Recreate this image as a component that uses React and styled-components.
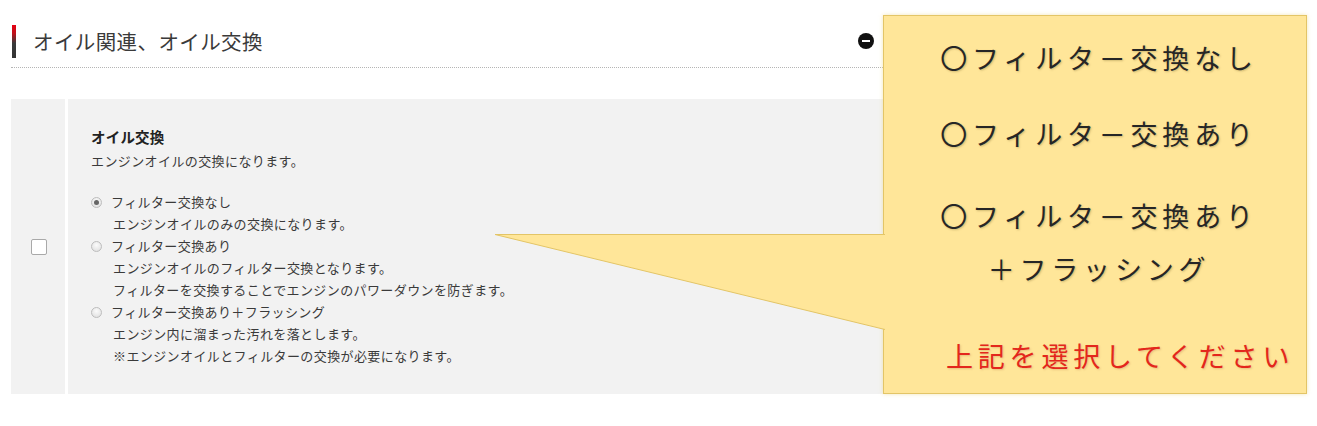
import React from "react";
import styled, { createGlobalStyle } from "styled-components";

const Global = createGlobalStyle`
  html, body { margin: 0; padding: 0; background: #fff; }
  body { font-family: "Noto Sans CJK JP", "Noto Sans", sans-serif; color: #333; }
`;

const Page = styled.div`
  position: relative;
  width: 1317px;
  height: 426px;
  overflow: hidden;
`;

const Section = styled.div`
  width: 872px;
  padding: 25px 0 0 11px;
`;

const Header = styled.div`
  display: flex;
  align-items: center;
  height: 33px;
  padding-bottom: 9px;
  border-bottom: 1px dotted #b5b5b5;
`;

const Bar = styled.span`
  width: 4px;
  height: 33px;
  margin-left: 1px;
  background: linear-gradient(#e60012 0%, #c0101a 25%, #3a3a3a 55%, #333 100%);
`;

const Title = styled.h2`
  flex: 1;
  margin: 0 0 0 17px;
  font-size: 20.5px;
  font-weight: 400;
  color: #3a3a3a;
  line-height: 33px;
  letter-spacing: 0.4px;
`;

const Toggle = styled.span`
  position: relative;
  width: 16px;
  height: 16px;
  margin-right: 9px;
  margin-top: -2px;
  border-radius: 50%;
  background: #111;
  &::after {
    content: "";
    position: absolute;
    left: 4px;
    top: 7px;
    width: 8px;
    height: 2px;
    background: #fff;
  }
`;

const Panel = styled.div`
  display: grid;
  grid-template-columns: 54px 3px 1fr;
  margin-top: 31px;
  height: 295px;
  background: #f2f2f2;
`;

const CheckCell = styled.div`
  display: flex;
  align-items: center;
  justify-content: center;
  padding-left: 1px;
`;

const Checkbox = styled.span`
  width: 14px;
  height: 14px;
  background: #fff;
  border: 1px solid #a9a9a9;
  border-radius: 2px;
  margin-top: 1px;
`;

const Divider = styled.div`
  background: #fff;
`;

const Content = styled.div`
  padding: 27px 0 0 23px;
  font-size: 13px;
  line-height: 22px;
  letter-spacing: 0.4px;
  color: #3a3a3a;
`;

const ItemTitle = styled.div`
  font-size: 14.5px;
  font-weight: 700;
  color: #222;
  letter-spacing: 0.2px;
`;

const Desc = styled.div`
  margin-top: 2px;
  margin-bottom: 19px;
`;

const Option = styled.div``;

const OptionLabel = styled.div`
  display: flex;
  align-items: center;
`;

const Radio = styled.span`
  position: relative;
  box-sizing: border-box;
  width: 11px;
  height: 11px;
  margin: 0 9px 0 0;
  border-radius: 50%;
  border: 1px solid #bdbdbd;
  background: radial-gradient(circle at 50% 35%, #fbfbfb, #dcdcdc);
  &::after {
    content: "";
    display: ${(p) => (p.$checked ? "block" : "none")};
    position: absolute;
    left: 2px;
    top: 2px;
    width: 5px;
    height: 5px;
    border-radius: 50%;
    background: #666;
  }
`;

const OptionNote = styled.div`
  padding-left: 22px;
`;

const Callout = styled.div`
  position: absolute;
  left: 883px;
  top: 15px;
  box-sizing: border-box;
  width: 424px;
  height: 379px;
  background: #ffe699;
  border: 1px solid #e3c567;
  box-shadow: 0 0 4px rgba(240, 220, 150, 0.7);
  padding-top: 24px;
  text-align: center;
`;

const Tail = styled.svg`
  position: absolute;
  left: 495px;
  top: 234px;
  overflow: visible;
`;

const CallLine = styled.div`
  font-size: 27px;
  line-height: 36px;
  letter-spacing: 4.8px;
  padding-left: 8px;
  color: #262626;
  text-shadow: 1px 1px 2px rgba(120, 100, 40, 0.35);
  margin-top: ${(p) => p.$mt || 0}px;
`;

const CallNote = styled(CallLine)`
  color: #e3271c;
  text-align: left;
  padding-left: 62px;
  text-shadow: 1px 1px 2px rgba(160, 80, 40, 0.25);
`;

const options = [
  { label: "フィルター交換なし", notes: ["エンジンオイルのみの交換になります。"], checked: true },
  {
    label: "フィルター交換あり",
    notes: ["エンジンオイルのフィルター交換となります。", "フィルターを交換することでエンジンのパワーダウンを防ぎます。"],
  },
  {
    label: "フィルター交換あり＋フラッシング",
    notes: ["エンジン内に溜まった汚れを落とします。", "※エンジンオイルとフィルターの交換が必要になります。"],
  },
];

export default function App() {
  return (
    <Page>
      <Global />
      <Section>
        <Header>
          <Bar />
          <Title>オイル関連、オイル交換</Title>
          <Toggle />
        </Header>
        <Panel>
          <CheckCell>
            <Checkbox />
          </CheckCell>
          <Divider />
          <Content>
            <ItemTitle>オイル交換</ItemTitle>
            <Desc>エンジンオイルの交換になります。</Desc>
            {options.map((o) => (
              <Option key={o.label}>
                <OptionLabel>
                  <Radio $checked={o.checked} />
                  {o.label}
                </OptionLabel>
                {o.notes.map((n) => (
                  <OptionNote key={n}>{n}</OptionNote>
                ))}
              </Option>
            ))}
          </Content>
        </Panel>
      </Section>
      <Callout>
        <CallLine>〇フィルタ－交換なし</CallLine>
        <CallLine $mt={40}>〇フィルタ－交換あり</CallLine>
        <CallLine $mt={46}>〇フィルタ－交換あり</CallLine>
        <CallLine $mt={17}>＋フラッシング</CallLine>
        <CallNote $mt={51}>上記を選択してください</CallNote>
      </Callout>
      <Tail width="390" height="96" viewBox="0 0 390 96">
        <polygon points="0,0.5 390,0.5 390,95.5" fill="#ffe699" />
        <polyline points="390,0.5 0,0.5 390,95.5" fill="none" stroke="#e3c567" strokeWidth="1" />
      </Tail>
    </Page>
  );
}
